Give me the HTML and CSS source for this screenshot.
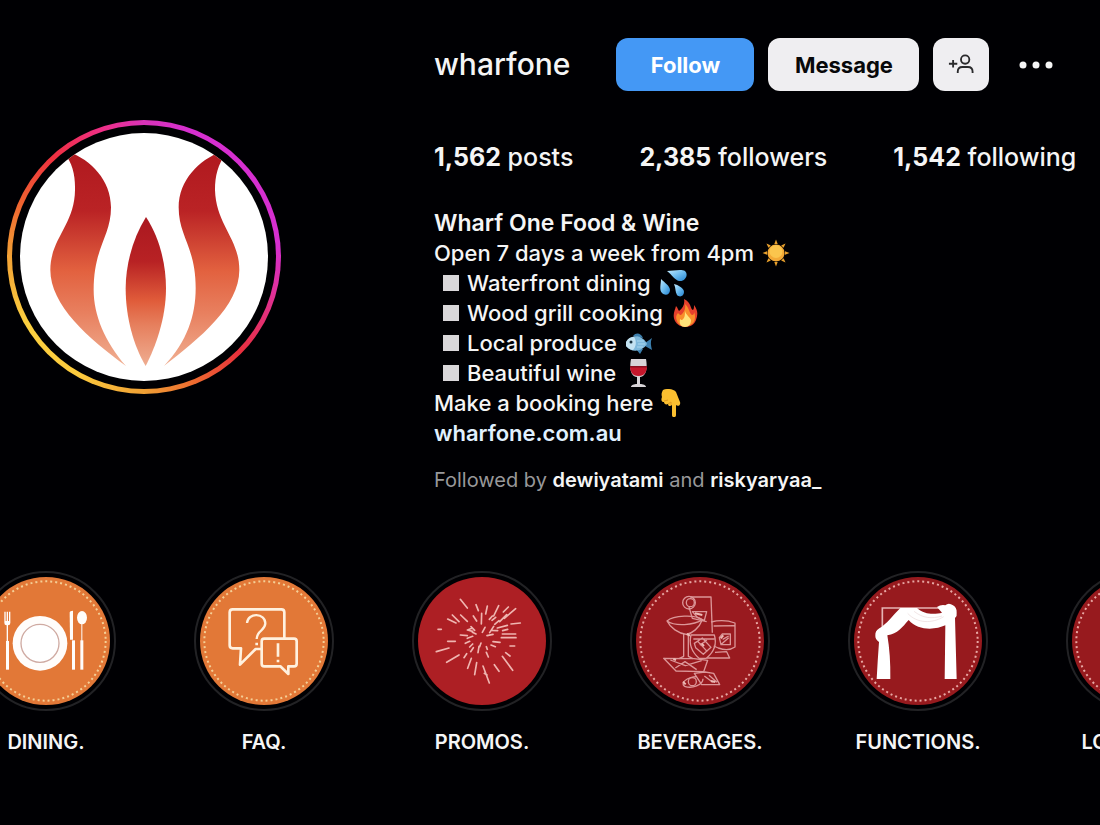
FILE: index.html
```
<!DOCTYPE html>
<html lang="en">

<head>
    <meta charset="UTF-8">
    <meta name="viewport" content="width=device-width, initial-scale=1">
    <title>wharfone</title>
    <link rel="stylesheet" href="styles.css">
</head>

<body>
    <main>
        <header class="profile">
            <div class="avatar">
                <div class="avatar-inner">
                    <svg viewBox="58 69 744 744" role="img" aria-label="wharfone">
                        <defs>
                            <linearGradient id="flame" gradientUnits="userSpaceOnUse" x1="0" y1="130" x2="0" y2="770">
                                <stop offset="0" stop-color="#b0191f" />
                                <stop offset="0.27" stop-color="#ba2325" />
                                <stop offset="0.55" stop-color="#e2613f" />
                                <stop offset="0.75" stop-color="#e8805f" />
                                <stop offset="1" stop-color="#f0b093" />
                            </linearGradient>
                            <linearGradient id="flame-mid" gradientUnits="userSpaceOnUse" x1="0" y1="320" x2="0" y2="770">
                                <stop offset="0" stop-color="#aa1820" />
                                <stop offset="0.3" stop-color="#b82224" />
                                <stop offset="0.56" stop-color="#e05c3a" />
                                <stop offset="0.72" stop-color="#e67f5d" />
                                <stop offset="1" stop-color="#efae92" />
                            </linearGradient>
                        </defs>
                        <rect x="58" y="69" width="744" height="744" fill="#fff" />
                        <path fill="url(#flame)" d="M190 128C216 160 224 195 223 240C222 345 149 385 149 480C149 585 262 685 376 768C312 695 279 615 279 540C279 410 331 380 331 292C331 210 270 150 205 125Z" />
                        <path fill="url(#flame)" d="M676 128C652 165 643 195 643 240C646 345 716 385 716 480C716 590 596 685 490 768C560 695 585 615 585 535C585 410 534 380 534 292C534 210 596 150 660 125Z" />
                        <path fill="url(#flame-mid)" d="M436 321C478 385 496 465 496 535C496 625 465 710 435 768C400 710 375 625 375 535C375 465 396 385 436 321Z" />
                    </svg>
                </div>
            </div>

            <section class="info">
                <div class="title-row">
                    <h1>wharfone</h1>
                    <div class="actions">
                        <button class="btn btn-follow">Follow</button>
                        <button class="btn btn-message">Message</button>
                        <button class="btn btn-icon" aria-label="Similar accounts">
                            <svg viewBox="0 0 28 22" fill="none" stroke="#2a2a2c" stroke-width="2">
                                <circle cx="18.500" cy="6" r="4.500" />
                                <path d="M10.500 20.500v-1.500c0-3 2-5 5-5h6c3 0 5 2 5 5v1.500M5.500 6.500v8M1 10.500h9" />
                            </svg>
                        </button>
                        <button class="btn-more" aria-label="Options">
                            <svg viewBox="0 0 34 8" fill="#f5f5f5">
                                <circle cx="4" cy="4" r="3.500" />
                                <circle cx="17" cy="4" r="3.500" />
                                <circle cx="30" cy="4" r="3.500" />
                            </svg>
                        </button>
                    </div>
                </div>

                <ul class="stats">
                    <li><b>1,562</b> posts</li>
                    <li><b>2,385</b> followers</li>
                    <li><b>1,542</b> following</li>
                </ul>

                <div class="bio">
                    <h2>Wharf One Food &amp; Wine</h2>
                    <p class="line">Open 7 days a week from 4pm
                        <svg class="emoji" viewBox="0 0 28 28">
                            <g fill="#e9a02c">
                                <path id="ray" d="M14 0.500L15.700 5H12.300Z" />
                                <use href="#ray" transform="rotate(45 14 14)" />
                                <use href="#ray" transform="rotate(90 14 14)" />
                                <use href="#ray" transform="rotate(135 14 14)" />
                                <use href="#ray" transform="rotate(180 14 14)" />
                                <use href="#ray" transform="rotate(225 14 14)" />
                                <use href="#ray" transform="rotate(270 14 14)" />
                                <use href="#ray" transform="rotate(315 14 14)" />
                            </g>
                            <circle cx="14" cy="14" r="8.500" fill="#f3a936" />
                            <circle cx="14" cy="12.500" r="6.500" fill="#fbc54d" />
                        </svg>
                    </p>
                    <ul class="features">
                        <li class="line">Waterfront dining
                            <svg class="emoji" viewBox="0 0 28 28">
                                <defs>
                                    <linearGradient id="water" x1="0" y1="0" x2="1" y2="1">
                                        <stop offset="0" stop-color="#c4ebff" />
                                        <stop offset="0.500" stop-color="#6cbcf0" />
                                        <stop offset="1" stop-color="#2483d0" />
                                    </linearGradient>
                                </defs>
                                <g fill="url(#water)">
                                    <path d="M8 2C14 2 22 0 26 2C30 6 26 13 20 12C16 11 13 6 8 2Z" />
                                    <path d="M2 10C6 14 11 17 11 21C11 26 6 27 3 24C0 21 2 15 2 10Z" />
                                    <path d="M15 15C19 16 25 19 25 23C25 27 21 29 18 26C16 23 17 19 15 15Z" />
                                </g>
                            </svg>
                        </li>
                        <li class="line">Wood grill cooking
                            <svg class="emoji" viewBox="0 0 28 28">
                                <path fill="#e6402c" d="M13 0C21 4 19 10 22 11C23 10 23 8 23 6C27 11 27 16 25 21C22 30 8 30 4 22C1 16 4 11 5 7C7 9 7 11 8 12C12 9 14 5 13 0Z" />
                                <path fill="#f98e2b" d="M14 5C19 10 18 14 21 16C23 16 23 14 23 13C25 17 24 23 21 25C16 29 8 28 6 22C4 18 6 15 7 14C9 16 9 16 10 16C13 13 15 10 14 5Z" />
                                <path fill="#ffe37a" d="M14 12C15 16 19 18 20 21C20 25 18 28 14 28C10 28 8 25 9 20C10 21 11 21 11 21C14 19 14 16 14 12Z" />
                            </svg>
                        </li>
                        <li class="line">Local produce
                            <svg class="emoji" viewBox="0 0 28 28">
                                <path fill="#3c7fae" d="M8 7C11 3 16 4 18 9M11 20L15 25L18 20M20 14L27 9C25 13 26 17 27 21L20 17Z" />
                                <path fill="#7fb9dc" d="M1 14C5 5 17 5 22 15C17 23 6 24 1 17Z" />
                                <path fill="#c3e2f2" d="M1 13C3 9 6 8 9 8C12 12 11 18 8 21C5 21 2 18 1 17Z" />
                                <circle cx="6" cy="13" r="1.500" fill="#17303f" />
                                <path fill="none" stroke="#a9d6ee" d="M12 12h7M13 15h7M12 18h6" />
                            </svg>
                        </li>
                        <li class="line">Beautiful wine
                            <svg class="emoji" viewBox="0 0 28 28">
                                <path fill="#d8d4d8" d="M7 0H22C23 5 24 17 16 18V25C19 25 22 26 22 28H7C7 26 10 25 13 25V18C5 17 6 5 7 0Z" />
                                <path fill="#c5172c" d="M6 7H23C23 12 21 17 14.500 17C8 17 6 12 6 7Z" />
                                <path fill="#8b1020" d="M6 7H23V8.500H6Z" />
                            </svg>
                        </li>
                    </ul>
                    <p class="line">Make a booking here
                        <svg class="emoji" viewBox="0 0 28 28">
                            <path fill="#fbbf30" d="M2 1C6-1 13 0 15 3L19 13C20 16 17 18 15 16V26C15 29 11 29 11 26V16C9 18 7 17 7 15C5 16 3 15 3 13C0 13 0 10 1 8C0 5 1 3 2 1Z" />
                            <path fill="none" stroke="#e09a20" d="M3 12L7 11M7 15L10 13V16" />
                        </svg>
                    </p>
                    <p><a class="site" href="#">wharfone.com.au</a></p>
                </div>

                <p class="followed">Followed by <a href="#">dewiyatami</a> and <a href="#">riskyaryaa_</a></p>
            </section>
        </header>

        <ul class="highlights">
            <li>
                <a href="#">
                    <span class="ring">
                        <svg viewBox="33 36 384 384">
                            <rect x="33" y="36" width="384" height="384" fill="#e27837" />
                            <circle class="stitch cream" cx="225" cy="228" r="179" />
                            <g fill="#fffdfb">
                                <circle cx="207" cy="235" r="82" />
                                <circle cx="207" cy="235" r="57" fill="#fff" stroke="#cfaaa2" stroke-width="4" />
                                <rect x="105" y="228" width="9" height="86" />
                                <path d="M100 140h4v28h3v-28h4v28h3v-28h4v34q0 7-7 7v50h-4v-50q-7 0-7-7Z" />
                                <path d="M296 143q0-6 10-6v87h-9Z" />
                                <rect x="303" y="226" width="9" height="88" />
                                <ellipse cx="333" cy="158" rx="15" ry="20" />
                                <rect x="331" y="176" width="3" height="52" />
                                <rect x="328" y="226" width="9" height="88" />
                            </g>
                        </svg>
                    </span>
                    DINING.
                </a>
            </li>
            <li>
                <a href="#">
                    <span class="ring">
                        <svg viewBox="33 36 384 384">
                            <rect x="33" y="36" width="384" height="384" fill="#e27837" />
                            <circle class="stitch cream" cx="225" cy="228" r="179" />
                            <g fill="none" stroke="#fff1df" stroke-width="8" stroke-linejoin="round">
                                <path d="M286 219V142Q286 133 277 133H131Q122 133 122 142V241Q122 250 131 250H156L153 299L200 252H217" />
                                <path d="M226 221H315Q323 221 323 229V296Q323 304 315 304H298V327L274 304H226Q218 304 218 296V229Q218 221 226 221Z" />
                                <path stroke-width="7" d="M174 174C177 142 229 143 229 175C229 198 204 194 203 222" />
                                <path stroke-width="8" d="M203 233v8M267 235v40M267 284v8" />
                            </g>
                        </svg>
                    </span>
                    FAQ.
                </a>
            </li>
            <li>
                <a href="#">
                    <span class="ring">
                        <svg viewBox="33 36 384 384">
                            <rect x="33" y="36" width="384" height="384" fill="#ad1f24" />
                            <path fill="none" stroke="#efb5b0" stroke-width="5" stroke-linecap="round" d="M160 103L181 129M207 119L214 137M241 123L236 147M275 122L260 153M304 126L289 141M326 131L292 160M340 174L312 177M326 207H286M327 218H283M323 243H309M296 263L309 273M286 274L317 316M262 299L276 319M228 303L247 354M232 325L240 330M209 293L203 329M193 280L182 310M156 270L119 292M126 249L88 260M145 229H122M103 193H93M147 174L122 162M156 170L136 150M181 169L161 150M224 145L223 177M209 168L199 153M247 163L256 153M263 178L276 167M271 189L301 181M248 203L260 184M234 187L226 202M203 196L192 185M181 195L197 199M181 212L160 210M197 214L181 220M188 229L175 235M197 237L188 246M179 266L171 278M191 260L199 248M213 263L216 244M238 262L244 276M238 245L241 253M252 240L265 245M258 230L279 232M240 212L258 208M254 196L272 197M207 207L196 202M266 157L255 166M299 149L278 170M287 197L302 193M195 190l-12 4M222 234l-4 11" />
                        </svg>
                    </span>
                    PROMOS.
                </a>
            </li>
            <li>
                <a href="#">
                    <span class="ring">
                        <svg viewBox="33 36 384 384">
                            <rect x="33" y="36" width="384" height="384" fill="#991a1f" />
                            <circle class="stitch" cx="225" cy="228" r="179" />
                            <g fill="none" stroke="#dc9698" stroke-width="4" stroke-linejoin="round">
                                <path d="M196 96H258L262 203M192 126L202 160L245 170M202 140H245L238 166L218 158Z" />
                                <circle cx="192" cy="113" r="19" />
                                <circle cx="196" cy="113" r="12" />
                                <path d="M126 168C145 151 210 148 232 164C222 190 202 205 184 208C160 206 136 188 126 168ZM126 168C150 185 207 181 232 164M176 208V274L162 281M190 207V274L204 281" />
                                <path d="M198 210H268Q280 250 244 280H222Q188 250 198 210ZM205 222H268M208 235L232 219L258 247L235 268L212 248ZM224 240L246 226M219 230L247 260" />
                                <path d="M258 171Q296 161 330 174V246Q310 260 280 249L266 243M266 183L328 182M292 207h24v32h-28l-5-21ZM293 223l18-10M289 238l22-20" />
                                <path d="M116 280L207 281L248 286L236 320L153 318ZM136 285L181 302L230 287M151 309L180 290L215 314M270 262L305 260L314 279H246" />
                                <path d="M208 325L240 321L266 325L284 359H230L208 325ZM238 333L263 352M252 331L276 352M216 335C183 336 165 356 179 364C201 372 234 360 234 341" />
                                <circle cx="202" cy="350" r="12" />
                            </g>
                            <path fill="none" stroke="#edbbb6" stroke-width="6" d="M185 207l10 5M210 145l22 5M145 282l8 3M174 350l8 8M287 220l8-9M258 348l13 3M230 236l7 7" />
                        </svg>
                    </span>
                    BEVERAGES.
                </a>
            </li>
            <li>
                <a href="#">
                    <span class="ring">
                        <svg viewBox="33 36 384 384">
                            <rect x="33" y="36" width="384" height="384" fill="#971a1e" />
                            <circle class="stitch" cx="225" cy="228" r="179" />
                            <path fill="none" stroke="#e6b4b4" stroke-width="5" d="M118 190V129H300" />
                            <path fill="#fff" d="M172 129H222C245 151 278 148 297 143L282 126Q294 118 307 121Q317 111 330 121Q342 128 341 143Q343 153 336 159L341 342H305L307 181C277 195 225 198 197 165C178 186 164 207 133 211Q143 269 142 342H101Q104 286 108 231Q96 223 97 211Q96 198 109 190C129 179 151 150 172 129Z" />
                            <path fill="none" stroke="#ead9d9" stroke-width="2" d="M194 145C222 176 268 176 302 155M213 139C240 160 266 162 297 153" />
                        </svg>
                    </span>
                    FUNCTIONS.
                </a>
            </li>
            <li>
                <a href="#">
                    <span class="ring">
                        <svg viewBox="33 36 384 384">
                            <rect x="33" y="36" width="384" height="384" fill="#971a1e" />
                            <circle class="stitch" cx="225" cy="228" r="179" />
                        </svg>
                    </span>
                    LOCATION.
                </a>
            </li>
        </ul>
    </main>
</body>

</html>
```
FILE: styles.css
```
* {
    box-sizing: border-box;
}

body {
    margin: 0;
    background-color: #000003;
    color: #f5f5f5;
    font-family: Inter, "Liberation Sans", sans-serif;
    overflow-x: hidden;
}

h1,
h2,
p,
ul {
    margin: 0;
    padding: 0;
}

ul {
    list-style: none;
}

a {
    color: inherit;
    text-decoration: none;
}

svg {
    display: block;
}

main {
    padding-top: 38px;
    overflow: hidden;
}

.profile {
    display: grid;
    grid-template-columns: 427px 1fr;
    padding-left: 7px;
}

/* gradient story ring around the picture */
.avatar {
    width: 274px;
    height: 274px;
    margin-top: 82px;
    padding: 5px;
    border-radius: 50%;
    background: conic-gradient(#d833b8, #d62fd0 20deg, #d62fd0 85deg, #e0309a 105deg, #e8303c 135deg, #ee6a30 158deg, #f0a035 180deg, #fccb3e 210deg, #fcd040 240deg, #f2a236 270deg, #f06030 295deg, #ef3040 318deg, #ef2f88 342deg, #d833b8);
}

.avatar-inner {
    padding: 8px;
    border-radius: 50%;
    background-color: #000003;
}

.avatar-inner svg {
    width: 100%;
    border-radius: 50%;
}

.title-row {
    display: flex;
    align-items: center;
    gap: 46px;
}

h1 {
    font-size: 30px;
    font-weight: 500;
    line-height: 53px;
}

.actions {
    display: flex;
    align-items: center;
    gap: 14px;
}

button {
    border: none;
    font-family: inherit;
    cursor: pointer;
}

.btn {
    height: 53px;
    border-radius: 12px;
    font-size: 22px;
    font-weight: 700;
    background-color: #efeef1;
    color: #08080a;
}

.btn-follow {
    width: 138px;
    background-color: #4498f5;
    color: #fff;
}

.btn-message {
    width: 151px;
}

.btn-icon {
    width: 56px;
    padding: 0 15px;
}

.btn-more {
    width: 66px;
    padding: 16px;
    background: none;
}

.stats {
    display: flex;
    gap: 66px;
    margin-top: 50px;
    font-size: 25px;
    font-weight: 500;
    line-height: 32px;
    white-space: nowrap;
}

.stats b {
    font-weight: 700;
}

.bio {
    margin-top: 35px;
    font-size: 22px;
    font-weight: 500;
    line-height: 30px;
}

.bio h2 {
    font-size: 23px;
    font-weight: 600;
}

.line {
    display: flex;
    align-items: center;
    gap: 8px;
}

.emoji {
    width: 28px;
    height: 28px;
}

.features .line {
    padding-left: 9px;
}

.features .line::before {
    content: "";
    width: 16px;
    height: 16px;
    background-color: #d9d7da;
}

.site {
    font-weight: 600;
    color: #e0f1ff;
}

.followed {
    margin-top: 19px;
    font-size: 20px;
    line-height: 26px;
    color: #98989a;
}

.followed a {
    font-weight: 600;
    color: #f5f5f5;
}

.highlights {
    display: flex;
    gap: 78px;
    margin: 78px 0 0 -24px;
}

.highlights a {
    display: flex;
    flex-direction: column;
    align-items: center;
    gap: 18px;
    width: 140px;
    font-size: 20px;
    font-weight: 600;
    line-height: 26px;
}

.ring {
    width: 140px;
    padding: 4px;
    border: 2px solid #222225;
    border-radius: 50%;
}

.ring svg {
    width: 100%;
    border-radius: 50%;
}

.stitch {
    fill: none;
    stroke: #e8a8a4;
    stroke-width: 6;
    stroke-dasharray: 6 9;
}

.cream {
    stroke: #f5cf96;
}
```
